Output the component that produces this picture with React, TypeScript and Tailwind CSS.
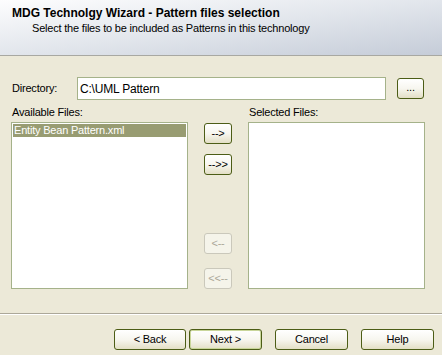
import React from "react";

const font = { fontFamily: '"Liberation Sans", Arial, sans-serif' };

function XpButton({
  children,
  className = "",
  disabled = false,
  isDefault = false,
}: {
  children: React.ReactNode;
  className?: string;
  disabled?: boolean;
  isDefault?: boolean;
}) {
  if (disabled) {
    return (
      <button
        disabled
        className={`flex items-center justify-center rounded-[3px] border border-[#cac8bb] bg-[#f5f4ea] text-[11px] text-[#aca899] ${className}`}
      >
        {children}
      </button>
    );
  }
  return (
    <button
      className={`flex items-center justify-center rounded-[3px] border border-[#4c5d16] bg-gradient-to-b from-white via-[#f7f6ef] to-[#e3dfc6] text-[11px] text-black ${
        isDefault ? "shadow-[inset_0_0_0_1px_#c9d69a]" : ""
      } ${className}`}
    >
      {children}
    </button>
  );
}

export default function App() {
  return (
    <div
      className="flex h-[355px] w-[442px] flex-col overflow-hidden bg-[#ece9d8] text-[11px] tracking-[-0.2px] text-black"
      style={font}
    >
      {/* header */}
      <div className="h-[56px] shrink-0 border-b border-[#a8a8a2] bg-gradient-to-br from-[#fdfdfe] via-[#e2e6ec] to-[#c5ccd8] pl-[12px] pt-[6px]">
        <div className="text-[12px] font-bold leading-[15px] tracking-normal">
          MDG Technolgy Wizard - Pattern files selection
        </div>
        <div className="pl-[20px] leading-[14px]">
          Select the files to be included as Patterns in this technology
        </div>
      </div>

      {/* directory row */}
      <div className="mt-[21px] flex items-center pl-[12px]">
        <div className="w-[65px]">Directory:</div>
        <div className="flex h-[23px] w-[309px] items-center border border-[#a5b28a] bg-white pl-[2px] text-[12px]">
          C:\UML Pattern
        </div>
        <XpButton className="ml-[11px] h-[21px] w-[27px] pb-[3px] text-[#1b1bb0]">
          ...
        </XpButton>
      </div>

      {/* lists */}
      <div className="mt-[5px] flex pl-[11px]">
        <div className="flex w-[177px] flex-col">
          <div className="h-[17px] pl-[1px] leading-[14px]">Available Files:</div>
          <div className="h-[167px] border border-[#a5b28a] bg-white p-[1px]">
            <div className="h-[13px] bg-[#989c72] pl-[1px] leading-[13px] text-white">
              Entity Bean Pattern.xml
            </div>
          </div>
        </div>

        <div className="ml-[16px] flex w-[28px] flex-col pt-[18px]">
          <XpButton className="h-[21px] w-[28px]">--&gt;</XpButton>
          <XpButton className="mt-[10px] h-[21px] w-[28px]">--&gt;&gt;</XpButton>
          <XpButton disabled className="mt-[58px] h-[21px] w-[28px]">
            &lt;--
          </XpButton>
          <XpButton disabled className="mt-[14px] h-[21px] w-[28px]">
            &lt;&lt;--
          </XpButton>
        </div>

        <div className="ml-[16px] flex w-[177px] flex-col">
          <div className="h-[17px] pl-[1px] leading-[14px]">Selected Files:</div>
          <div className="h-[167px] border border-[#a5b28a] bg-white" />
        </div>
      </div>

      {/* separator */}
      <div className="mt-[24px] border-t border-b border-t-[#aca899] border-b-white" />

      {/* footer buttons */}
      <div className="mt-[14px] flex justify-end pr-[8px]">
        <XpButton className="h-[21px] w-[72px]">&lt; Back</XpButton>
        <XpButton isDefault className="ml-[3px] h-[21px] w-[73px]">
          Next &gt;
        </XpButton>
        <XpButton className="ml-[13px] h-[21px] w-[73px]">Cancel</XpButton>
        <XpButton className="ml-[13px] h-[21px] w-[73px]">Help</XpButton>
      </div>
    </div>
  );
}
